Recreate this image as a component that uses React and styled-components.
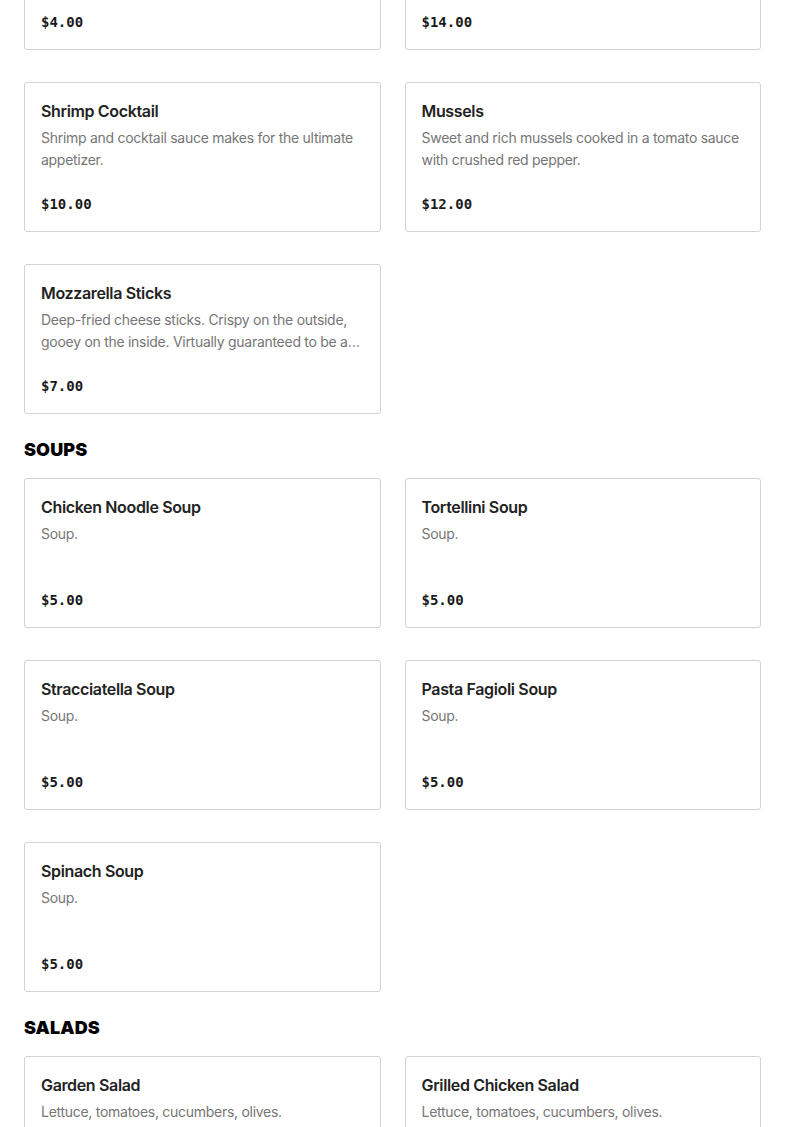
import React from "react";
import styled, { createGlobalStyle } from "styled-components";

const GlobalStyle = createGlobalStyle`
  html, body { margin: 0; padding: 0; background: #ffffff; }
  body { font-family: Inter, "Noto Sans", sans-serif; color: #222222; }
  * { box-sizing: border-box; }
`;

const Page = styled.main`
  padding: 0 24px 24px;
  margin-top: -100px;
  display: flex;
  flex-direction: column;
`;

const Section = styled.section`
  display: flex;
  flex-direction: column;
  & + & { margin-top: 24px; }
`;

const SectionTitle = styled.h2`
  margin: 0 0 16px;
  font-family: Inter, "Noto Sans", sans-serif;
  font-weight: 900;
  font-size: 18px;
  line-height: 24px;
  letter-spacing: 0.1px;
  color: #000000;
  text-transform: uppercase;
`;

const Grid = styled.div`
  display: grid;
  grid-template-columns: 1fr 1fr;
  column-gap: 24px;
  row-gap: 32px;
`;

const Card = styled.article`
  height: 150px;
  border: 1px solid #d3d3d3;
  border-radius: 3px;
  padding: 16px;
  display: flex;
  flex-direction: column;
  background: #ffffff;
`;

const ItemName = styled.h3`
  margin: 0;
  font-size: 16px;
  line-height: 24px;
  font-weight: 600;
  letter-spacing: -0.35px;
  color: #222222;
`;

const ItemDesc = styled.p`
  margin: 4px 0 0;
  font-size: 14px;
  line-height: 22px;
  letter-spacing: -0.28px;
  color: #767676;
  display: -webkit-box;
  -webkit-line-clamp: 2;
  -webkit-box-orient: vertical;
  overflow: hidden;
`;

const Price = styled.div`
  margin-top: auto;
  font-family: "DejaVu Sans Mono", "Liberation Mono", monospace;
  font-weight: 700;
  font-size: 14px;
  line-height: 22px;
  color: #1a1a1a;
`;

const sections = [
  {
    title: null,
    items: [
      { name: "Garlic Bread", desc: "Toasted bread with garlic butter and herbs.", price: "$4.00" },
      { name: "Fried Calamari", desc: "Lightly fried calamari served with marinara sauce.", price: "$14.00" },
      { name: "Shrimp Cocktail", desc: "Shrimp and cocktail sauce makes for the ultimate appetizer.", price: "$10.00" },
      { name: "Mussels", desc: "Sweet and rich mussels cooked in a tomato sauce with crushed red pepper.", price: "$12.00" },
      { name: "Mozzarella Sticks", desc: "Deep-fried cheese sticks. Crispy on the outside, gooey on the inside. Virtually guaranteed to be a hit with everyone at the table.", price: "$7.00" },
    ],
  },
  {
    title: "Soups",
    items: [
      { name: "Chicken Noodle Soup", desc: "Soup.", price: "$5.00" },
      { name: "Tortellini Soup", desc: "Soup.", price: "$5.00" },
      { name: "Stracciatella Soup", desc: "Soup.", price: "$5.00" },
      { name: "Pasta Fagioli Soup", desc: "Soup.", price: "$5.00" },
      { name: "Spinach Soup", desc: "Soup.", price: "$5.00" },
    ],
  },
  {
    title: "Salads",
    items: [
      { name: "Garden Salad", desc: "Lettuce, tomatoes, cucumbers, olives.", price: "$6.00" },
      { name: "Grilled Chicken Salad", desc: "Lettuce, tomatoes, cucumbers, olives.", price: "$9.00" },
    ],
  },
];

export default function App() {
  return (
    <>
      <GlobalStyle />
      <Page>
        {sections.map((s, i) => (
          <Section key={i}>
            {s.title && <SectionTitle>{s.title}</SectionTitle>}
            <Grid>
              {s.items.map((it) => (
                <Card key={it.name}>
                  <ItemName>{it.name}</ItemName>
                  <ItemDesc>{it.desc}</ItemDesc>
                  <Price>{it.price}</Price>
                </Card>
              ))}
            </Grid>
          </Section>
        ))}
      </Page>
    </>
  );
}
